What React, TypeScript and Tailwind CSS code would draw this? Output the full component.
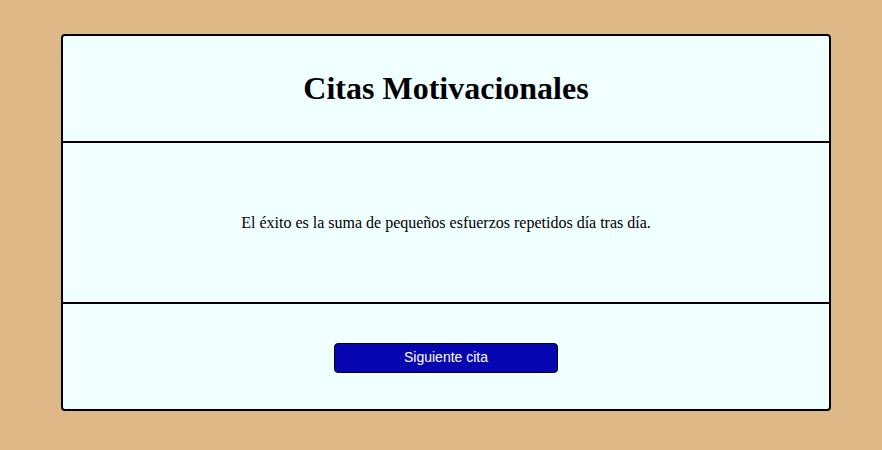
import { useState } from 'react';

const citas = [
    'El éxito es la suma de pequeños esfuerzos repetidos día tras día.',
    'La constancia es la clave del progreso.',
    'Cree en ti y todo será posible.',
];

export default function App() {
    const [indice, setIndice] = useState<number>(0);

    /** siguiente cita */
    const siguiente = () => {
        setIndice((indice + 1) % citas.length);
    };

    return (
        <main className="min-h-[450px] w-full bg-[#deb887] pt-[34px]">
            <section className="ml-[61px] flex w-[770px] flex-col rounded-[4px] border-2 border-black bg-[#f0ffff] font-['Liberation_Serif',serif] text-black">
                <header className="flex h-[107px] items-center justify-center border-b-2 border-black">
                    <h1 className="text-[32px] font-bold leading-[37px]">Citas Motivacionales</h1>
                </header>
                <div className="flex h-[161px] items-center justify-center border-b-2 border-black">
                    <p className="text-[16px] leading-[18px]">{citas[indice]}</p>
                </div>
                <div className="flex h-[105px] items-center justify-center pt-[2px]">
                    <button
                        onClick={siguiente}
                        className="h-[30px] w-[224px] rounded-[4px] border border-black bg-[#0606b0] font-['Liberation_Sans',sans-serif] text-[14px] text-white"
                    >
                        Siguiente cita
                    </button>
                </div>
            </section>
        </main>
    );
}
